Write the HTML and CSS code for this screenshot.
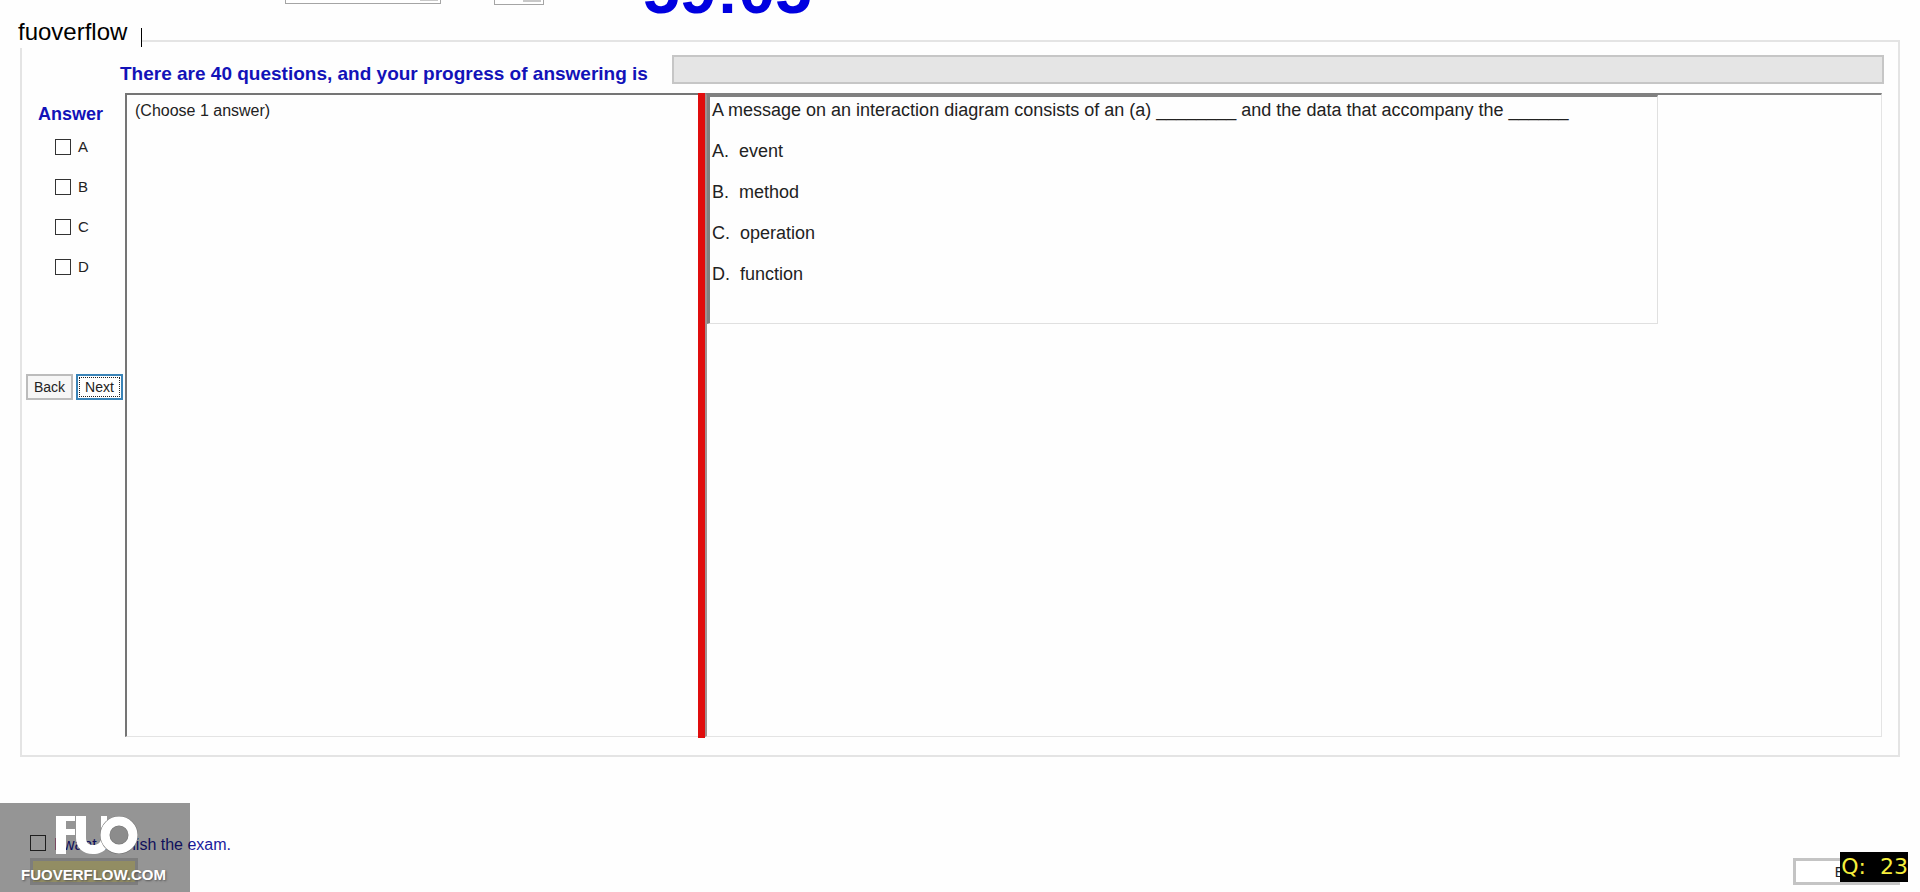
FILE: index.html
```html
<!DOCTYPE html>
<html lang="en">
<head>
<meta charset="utf-8">
<title>Exam</title>
<link rel="stylesheet" href="styles.css">
</head>
<body>
<header class="topbar">
  <select class="pick pick-font" aria-label="Font"><option></option></select>
  <select class="pick pick-size" aria-label="Size"><option></option></select>
  <div class="timer">59:05</div>
</header>
<main class="exam">
  <div class="room-name">fuoverflow</div>
  <div class="progress-row">
    <span class="heading progress-label" id="progress-label">There are 40 questions, and your progress of answering is</span>
    <div class="progress" role="progressbar" aria-labelledby="progress-label"></div>
  </div>
  <div class="work">
    <section class="answers">
      <h2 class="heading answers-title">Answer</h2>
      <label class="choice"><input type="checkbox" class="box">A</label>
      <label class="choice"><input type="checkbox" class="box">B</label>
      <label class="choice"><input type="checkbox" class="box">C</label>
      <label class="choice"><input type="checkbox" class="box">D</label>
      <div class="nav">
        <button class="nav-btn">Back</button>
        <button class="nav-btn nav-next">Next</button>
      </div>
    </section>
    <section class="hint">(Choose 1 answer)</section>
    <div class="splitter"></div>
    <section class="question">
      <div class="question-body">
        <p>A message on an interaction diagram consists of an (a) ________ and the data that accompany the ______</p>
        <p>A.&nbsp; event</p>
        <p>B.&nbsp; method</p>
        <p>C.&nbsp; operation</p>
        <p>D.&nbsp; function</p>
      </div>
    </section>
  </div>
</main>
<footer class="footer">
  <div class="finish">
    <label class="finish-label"><input type="checkbox" class="box"><span class="finish-text">I want to finish the exam.</span></label>
    <button class="finish-btn" aria-label="Finish"></button>
  </div>
  <button class="exit-btn">Exit</button>
  <div class="watermark">
    <svg class="logo" viewBox="0 0 84 42" aria-hidden="true">
      <path d="M1 2H20V7H11V15H20V21H11V40H1Z" fill="#fff"/>
      <path d="M21 2H31V24C31 29 34 31 38 31C42 31 45 29 46 26V2H52V34C48 38 44 40 38 40C28 40 21 34 21 24Z" fill="#fff"/>
      <circle cx="64" cy="21" r="18" fill="#8c8c8c"/>
      <circle cx="64" cy="21" r="14" fill="none" stroke="#777" stroke-width="10"/>
      <circle cx="64" cy="21" r="14" fill="none" stroke="#fff" stroke-width="9"/>
    </svg>
    <span class="site">FUOVERFLOW.COM</span>
  </div>
  <div class="counter">Q:&nbsp; 23</div>
</footer>
</body>
</html>
```
FILE: styles.css
```css
* { box-sizing: border-box; }
body {
  margin: 0;
  min-height: 100vh;
  display: flex;
  flex-direction: column;
  overflow: hidden;
  background: #fefefe;
  color: #222;
  font: 16px/20px "Liberation Sans", Arial, sans-serif;
}
.topbar {
  display: flex;
  align-items: flex-end;
  height: 16px;
  padding-left: 285px;
}
.pick {
  appearance: none;
  height: 24px;
  margin-bottom: 12px;
  border: 1px solid #a5a5a5;
  border-radius: 0;
  background: linear-gradient(#c8c8c8, #c8c8c8) right 2px top 0 / 18px 20px no-repeat #fff;
}
.pick-font { width: 156px; }
.pick-size { width: 50px; margin: 0 0 11px 53px; }
.timer {
  margin: 0 0 -7px 99px;
  color: #0000e0;
  font-weight: bold;
  font-size: 66px;
  line-height: 66px;
}
.exam {
  position: relative;
  flex: 1;
  display: flex;
  flex-direction: column;
  margin: 24px 20px 0 20px;
  padding: 13px 14px 18px 0;
  border: 2px solid #e4e4e4;
}
.room-name {
  position: absolute;
  left: -22px;
  top: -24px;
  padding: 0 15px 2px 18px;
  background: #fefefe;
  color: #000;
  font-size: 24px;
  line-height: 28px;
}
.room-name::after {
  content: "";
  position: absolute;
  right: 0;
  top: 10px;
  width: 1px;
  height: 19px;
  background: #000;
}
.heading {
  margin: 0;
  color: #1212b8;
  font-size: 18px;
  font-weight: bold;
  line-height: 20px;
}
.progress-row {
  display: flex;
  align-items: center;
  padding-left: 98px;
  gap: 24px;
}
.progress-label {
  padding-top: 9px;
  font-size: 19px;
  white-space: nowrap;
}
.progress {
  flex: 1;
  height: 29px;
  border: 2px solid #c6c6c6;
  background: #e5e5e5;
}
.work { flex: 1; display: flex; margin-top: 9px; }
.answers { width: 103px; }
.answers-title { padding: 11px 0 13px 16px; }
.choice {
  display: flex;
  align-items: center;
  gap: 7px;
  height: 20px;
  margin: 0 0 20px 33px;
  font-size: 15px;
}
.box {
  appearance: none;
  width: 16px;
  height: 16px;
  margin: 0;
  border: 1px solid #333;
  background: #fff;
}
.nav { display: flex; gap: 3px; padding: 77px 0 0 4px; }
.nav-btn {
  width: 47px;
  height: 26px;
  padding: 0;
  border: 2px solid #bcbcbc;
  background: #f6f6f6;
  color: #222;
  font: 14px/20px "Liberation Sans", Arial, sans-serif;
}
.nav-next {
  border-color: #3a84b8;
  background: #fff;
  outline: 1px dotted #222;
  outline-offset: -4px;
}
.hint {
  flex: 0 0 573px;
  padding: 6px 8px;
  border: solid;
  border-width: 2px 0 1px 2px;
  border-color: #757575 #e4e4e4 #e4e4e4 #757575;
}
.splitter { width: 7px; margin-bottom: -1px; background: #e00d0d; }
.question {
  flex: 1;
  margin-right: 2px;
  border: solid;
  border-width: 2px 1px 1px 2px;
  border-color: #808080 #e4e4e4 #e4e4e4 #a09090;
}
.question-body {
  width: 81%;
  padding: 3px 2px 18px;
  border: solid;
  border-width: 2px 1px 1px 3px;
  border-color: #808080 #e0e0e0 #e0e0e0 #808080;
  font-size: 18px;
  line-height: 21px;
  white-space: nowrap;
}
.question-body p { margin: 0 0 20px; }
.footer {
  position: relative;
  display: flex;
  justify-content: space-between;
  align-items: flex-end;
  height: 135px;
  padding: 0 20px 7px 30px;
}
.finish-label {
  display: flex;
  align-items: center;
  gap: 8px;
  margin-bottom: 3px;
  color: #1a1a9c;
}
.finish-text { padding-top: 4px; }
.finish-btn {
  display: block;
  width: 108px;
  height: 27px;
  border: 3px solid #d4d4d4;
  background: #f8f0a8;
}
.exit-btn {
  width: 107px;
  height: 27px;
  border: 3px solid #c4c4c4;
  background: #fff;
  color: #222;
  font: 14px/20px "Liberation Sans", Arial, sans-serif;
}
.watermark {
  position: absolute;
  left: 0;
  bottom: 0;
  width: 190px;
  height: 89px;
  padding: 11px 0 0 21px;
  background: rgba(0, 0, 0, 0.41);
}
.logo { display: block; width: 84px; height: 42px; margin-left: 34px; }
.site {
  display: block;
  margin-top: 7px;
  color: #fff;
  font: bold 15px/24px "Liberation Sans", Arial, sans-serif;
  text-shadow: 1px 1px 2px #555;
}
.counter {
  position: absolute;
  right: 12px;
  bottom: 10px;
  padding-left: 1px;
  background: #000;
  color: #f5ee3c;
  font: 22px/30px "DejaVu Sans", sans-serif;
}
```
